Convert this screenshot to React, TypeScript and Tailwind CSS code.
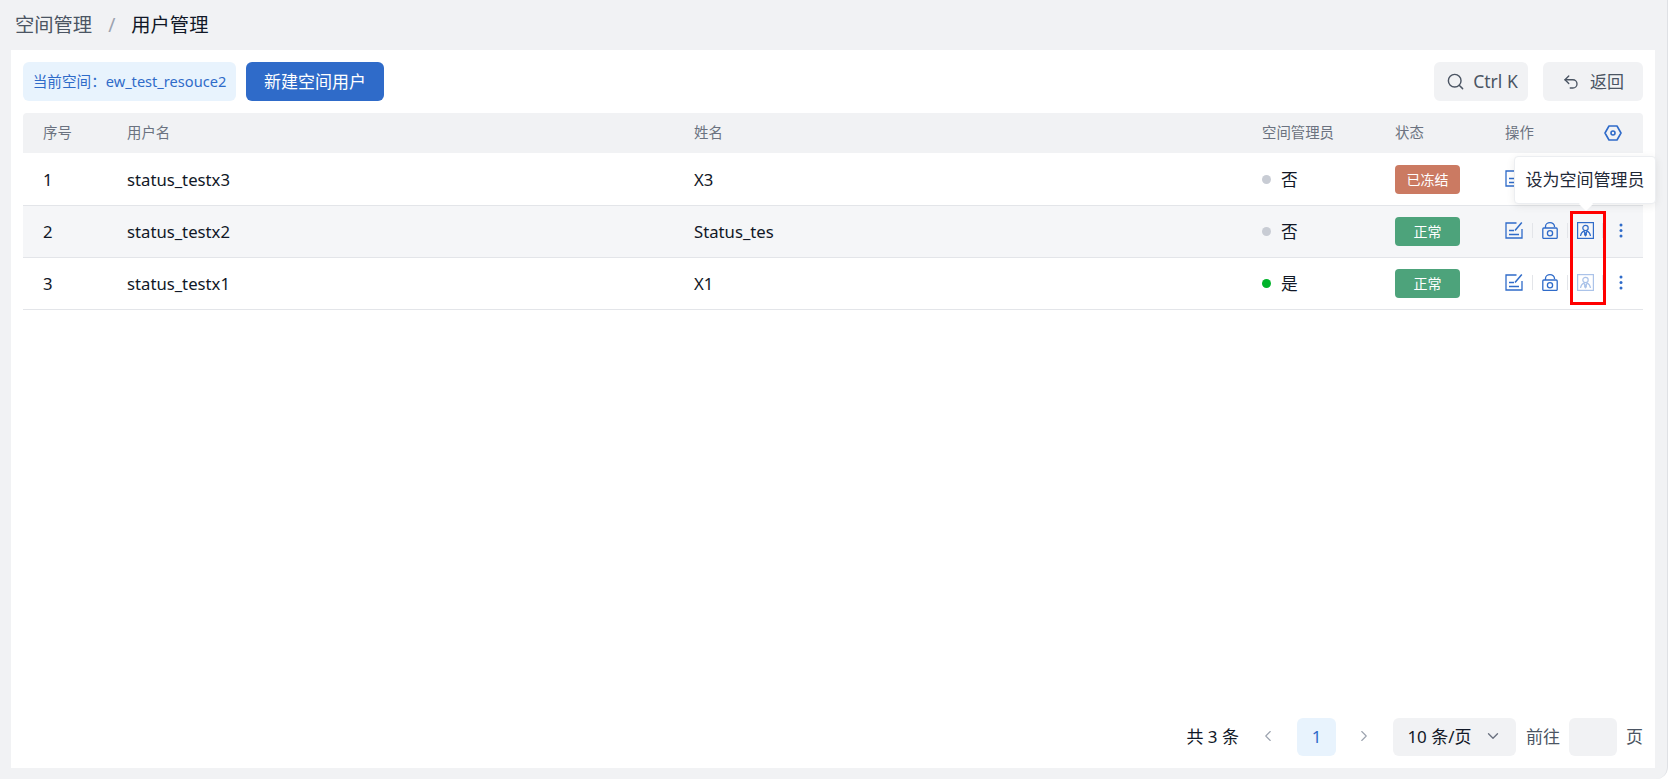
import { ChevronDown, ChevronLeft, ChevronRight, Search, Undo2 } from 'lucide-react';

const FONT = '"Noto Sans", "Noto Sans CJK SC", sans-serif';

const rows = [
  { id: 1, user: 'status_testx3', name: 'X3', admin: false, frozen: true },
  { id: 2, user: 'status_testx2', name: 'Status_tes', admin: false, frozen: false },
  { id: 3, user: 'status_testx1', name: 'X1', admin: true, frozen: false },
];

function EditIcon() {
  return (
    <svg width="18" height="18" viewBox="0 0 18 18" fill="none" stroke="#2f6bc9" strokeWidth="1.3">
      <path d="M11.5 2H1v15h16V8" />
      <path d="M4 9.5h5M4 13.5h10" />
      <path d="M10 9.5L16.8 1.5" strokeWidth="1.5" />
    </svg>
  );
}

function LockIcon() {
  return (
    <svg width="16" height="17" viewBox="0 0 16 17" fill="none" stroke="#2f6bc9" strokeWidth="1.3">
      <path d="M3.5 6V4.5a4.5 3.8 0 0 1 9 0V5" />
      <rect x="0.8" y="6" width="14.4" height="10.4" rx="1" />
      <circle cx="8" cy="11.2" r="2.6" />
    </svg>
  );
}

function AdminIcon({ disabled }: { disabled: boolean }) {
  return (
    <svg
      width="17"
      height="17"
      viewBox="0 0 17 17"
      fill="none"
      stroke="#2f6bc9"
      strokeWidth="1.2"
      className={disabled ? 'opacity-40' : ''}
    >
      <rect x="0.6" y="0.6" width="15.8" height="15.8" />
      <circle cx="8.5" cy="6" r="2.7" />
      <path d="M3.5 14c.4-2.6 1.8-4.3 3.5-5l1.5 4 1.5-4c1.7.7 3.1 2.4 3.5 5" />
      <path d="M7.6 10.5h1.8l.6 2.5-1.5 1.4L7 13z" fill="#2f6bc9" stroke="none" />
    </svg>
  );
}

function Dots() {
  return (
    <svg width="4" height="15" viewBox="0 0 4 15" fill="#2f6bc9">
      <circle cx="2" cy="2" r="1.5" />
      <circle cx="2" cy="7.5" r="1.5" />
      <circle cx="2" cy="13" r="1.5" />
    </svg>
  );
}

function Divider() {
  return <span className="h-[15px] w-px bg-[#e3e5e9]" />;
}

export default function App() {
  return (
    <div className="relative h-[779px] w-[1673px] overflow-hidden bg-white" style={{ fontFamily: FONT }}>
      <div className="flex h-full w-[1668px] flex-col rounded-br-xl border-r border-[#dfe1e5] bg-[#f1f2f4]">
        {/* 面包屑 */}
        <div className="flex h-[50px] items-center pl-[15px] text-[19.3px]">
          <span className="text-[#4b5563]">空间管理</span>
          <span className="mx-4 text-[#9ca3af]">/</span>
          <span className="text-[#111827]">用户管理</span>
        </div>

        {/* 主体 */}
        <div className="ml-[11px] flex h-[718px] w-[1644px] flex-col bg-white px-3 pt-3 pb-3">
          <div className="flex h-[39px] items-stretch">
            <div className="flex w-[213px] items-center justify-center rounded-md bg-[#e8f3fd] text-[14.6px] text-[#2f6bc9]">
              当前空间：ew_test_resouce2
            </div>
            <button className="ml-[10px] w-[138px] rounded-md bg-[#2f6bc9] text-[17px] text-white">新建空间用户</button>
            <button className="ml-auto flex w-[94px] items-center justify-center gap-2 rounded-md bg-[#f1f2f4] pl-0.5 text-[17.5px] text-[#4b5563]">
              <Search size={19} strokeWidth={1.8} />
              Ctrl K
            </button>
            <button className="ml-[15px] flex w-[100px] items-center justify-center gap-2.5 rounded-md bg-[#f1f2f4] text-[17px] text-[#4b5563]">
              <Undo2 size={18} strokeWidth={1.8} />
              返回
            </button>
          </div>

          {/* 表格 */}
          <div className="mt-3">
            <div className="mb-px grid h-10 grid-cols-[84px_567px_568px_133px_1fr] items-center rounded-t-sm bg-[#f1f2f4] text-[14.4px] text-[#6b7280]">
              <div className="pl-5">序号</div>
              <div className="pl-5">用户名</div>
              <div className="pl-5">姓名</div>
              <div className="pl-5">空间管理员</div>
              <div className="grid grid-cols-[110px_1fr] items-center">
                <div className="pl-5">状态</div>
                <div className="flex items-center justify-between pr-[21px] pl-5">
                  <span>操作</span>
                  <svg width="18" height="18" viewBox="0 0 18 18" fill="none" stroke="#2f6bc9" strokeWidth="1.6">
                    <path d="M5 2h8l4 7-4 7H5L1 9z" strokeLinejoin="round" />
                    <circle cx="9" cy="9" r="2" />
                  </svg>
                </div>
              </div>
            </div>

            {rows.map((r) => (
              <div
                key={r.id}
                className={`grid h-[52px] grid-cols-[84px_567px_568px_133px_110px_1fr] items-center border-b border-[#e3e5e9] text-[16.7px] text-[#111827] ${
                  r.id === 2 ? 'bg-[#f5f6f8]' : 'bg-white'
                }`}
              >
                <div className="pl-5">{r.id}</div>
                <div className="pl-5">{r.user}</div>
                <div className="pl-5">{r.name}</div>
                <div className="flex items-center pl-5">
                  <span className={`h-[9px] w-[9px] rounded-full ${r.admin ? 'bg-[#00b32a]' : 'bg-[#c8ccd4]'}`} />
                  <span className="ml-[10px]">{r.admin ? '是' : '否'}</span>
                </div>
                <div className="pl-5">
                  <span
                    className={`flex h-[29px] w-[65px] items-center justify-center rounded-[4px] text-[14px] text-white ${
                      r.frozen ? 'bg-[#cb7a62]' : 'bg-[#4da37b]'
                    }`}
                  >
                    {r.frozen ? '已冻结' : '正常'}
                  </span>
                </div>
                <div className="-mt-[3px] flex items-center pl-5">
                  <EditIcon />
                  <span className="ml-[9px] flex"><Divider /></span>
                  <span className="ml-[9px] flex"><LockIcon /></span>
                  <span className="ml-[9px] flex"><Divider /></span>
                  <span className="ml-[9px] flex"><AdminIcon disabled={r.admin} /></span>
                  <span className="ml-2 flex"><Divider /></span>
                  <span className="ml-4 flex"><Dots /></span>
                </div>
              </div>
            ))}
          </div>

          {/* 分页 */}
          <div className="mt-auto flex h-[38px] items-center justify-end text-[17px]">
            <span className="text-[#111827]">共 3 条</span>
            <ChevronLeft size={18} strokeWidth={1.5} className="ml-5 -translate-y-px text-[#9ca3af]" />
            <span className="ml-[20px] flex h-[38px] w-[39px] items-center justify-center rounded-md bg-[#e8f3fd] text-[#2f6bc9]">1</span>
            <ChevronRight size={18} strokeWidth={1.5} className="ml-[19px] -translate-y-px text-[#9ca3af]" />
            <div className="ml-[20px] flex h-[38px] w-[123px] items-center justify-center gap-3 rounded-md bg-[#f1f2f4] text-[#111827]">
              10 条/页
              <ChevronDown size={18} strokeWidth={1.8} className="-translate-y-px text-[#6b7280]" />
            </div>
            <span className="ml-[10px] text-[#4b5563]">前往</span>
            <div className="ml-[9px] h-[38px] w-[48px] rounded-md bg-[#f1f2f4]" />
            <span className="ml-[9px] text-[#4b5563]">页</span>
          </div>
        </div>
      </div>

      {/* 提示气泡 */}
      <div className="absolute top-[156px] left-[1514px] flex h-[48px] w-[142px] items-center justify-center rounded-[4px] border border-[#eceef1] bg-white text-[17px] text-[#1f2937] shadow-[0_2px_8px_rgba(0,0,0,0.08)]">
        设为空间管理员
        <span className="absolute -bottom-[6px] left-[66px] h-[10px] w-[10px] rotate-45 bg-white" />
      </div>

      {/* 红框标注 */}
      <div className="absolute top-[211px] left-[1570px] h-[94px] w-[36px] border-[3px] border-[#ff0000]" />
    </div>
  );
}
